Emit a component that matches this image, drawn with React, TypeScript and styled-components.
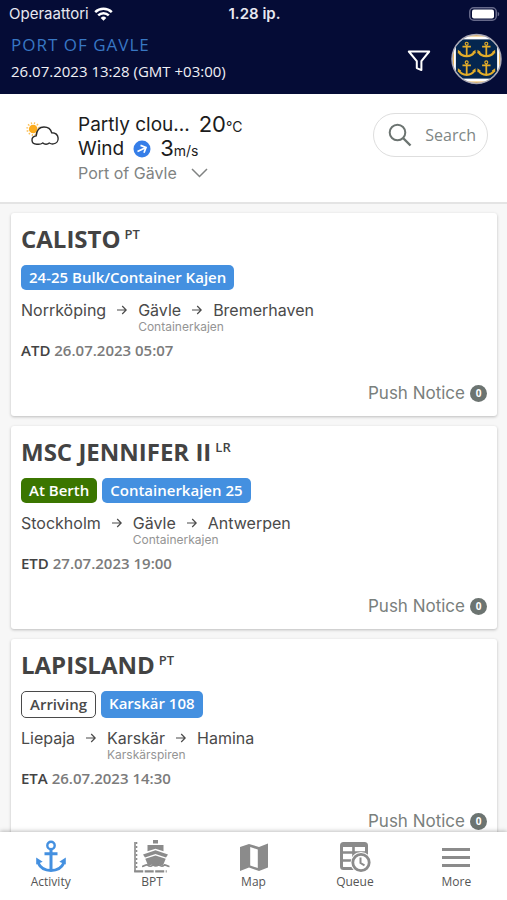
import React from "react";
import styled, { createGlobalStyle, css } from "styled-components";

const sans = `"Open Sans", "Noto Sans", sans-serif`;
const system = `Inter, Roboto, sans-serif`;

const GlobalStyle = createGlobalStyle`
  *, *::before, *::after { box-sizing: border-box; }
  body { margin: 0; background: #f7f7f7; color: #4a4a4a; font-family: ${sans}; }
  h1, h2, p { margin: 0; }
  svg { display: block; flex: none; }
  button { font: inherit; color: inherit; background: none; border: 0; padding: 0; cursor: pointer; }
`;

const Screen = styled.div`
  display: flex;
  flex-direction: column;
  height: 100vh;
  overflow: hidden;
`;

const Header = styled.header`
  flex: none;
  background: #050c36;
  color: #fff;
`;

const StatusBar = styled.div`
  display: grid;
  grid-template-columns: 1fr auto 1fr;
  align-items: center;
  height: 28px;
  padding: 0 7px 0 9px;
  font: 400 15px/20px ${system};
  color: #e8e8f0;
`;

const Carrier = styled.div`
  display: flex;
  align-items: center;
  gap: 5px;
`;

const Clock = styled.time`
  font-weight: 600;
`;

const Battery = styled.div`
  justify-self: end;
`;

const TitleBar = styled.div`
  display: flex;
  align-items: center;
  justify-content: space-between;
  padding: 4px 5px 8px 11px;
`;

const PortName = styled.h1`
  font-size: 17px;
  font-weight: 400;
  line-height: 26px;
  letter-spacing: 1px;
  color: #3877c4;
`;

const PortTime = styled.p`
  padding-bottom: 2px;
  font-size: 15px;
  line-height: 26px;
  color: #f0f0f5;
`;

const HeaderActions = styled.div`
  display: flex;
  align-items: center;
  gap: 20px;
`;

const WeatherBar = styled.section`
  flex: none;
  display: flex;
  align-items: flex-start;
  padding: 19px 19px 16px 26px;
  min-height: 110px;
  background: #fff;
  border-bottom: 2px solid #e4e4e4;
  font-family: ${system};
  color: #1c1c1c;
`;

const WeatherSymbol = styled.div`
  margin-top: 8px;
`;

const WeatherText = styled.div`
  flex: 1;
  margin-left: 18px;
`;

const WeatherLine = styled.p<{ $gap: number }>`
  display: flex;
  align-items: center;
  gap: ${(p) => p.$gap}px;
  height: 24px;
  font-size: 19px;
  line-height: 24px;
`;

const Reading = styled.span`
  font-size: 22px;
`;

const Unit = styled.small`
  font-size: 14px;
`;

const PortSelect = styled.button`
  display: flex;
  align-items: center;
  gap: 14px;
  font-size: 16px;
  line-height: 24px;
  color: #808382;
`;

const SearchButton = styled.button`
  display: flex;
  align-items: center;
  gap: 13px;
  height: 44px;
  padding: 0 11px 0 14px;
  border: 1px solid #dedede;
  border-radius: 22px;
  font-family: ${sans};
  font-size: 16px;
  color: #808785;
`;

const List = styled.main`
  flex: 1;
  min-height: 0;
  overflow-y: auto;
  scrollbar-width: none;
  display: flex;
  flex-direction: column;
  gap: 10px;
  padding: 9px 10px 10px 11px;
`;

const Card = styled.article`
  flex: none;
  padding: 9px 10px 13px;
  background: #fff;
  border-radius: 3px;
  box-shadow: 0 1px 3px rgba(0, 0, 0, 0.24);
`;

const ShipName = styled.h2`
  display: flex;
  gap: 4px;
  font-size: 24px;
  font-weight: 700;
  line-height: 34px;
  color: #434343;
`;

const Flag = styled.span`
  font-size: 13px;
  font-weight: 600;
  line-height: 24px;
`;

const Tags = styled.div`
  display: flex;
  gap: 5px;
  margin-top: 9px;
`;

type Tone = "berth" | "quay" | "outline";

const tones = {
  quay: css`
    background: #4490e0;
    color: #fff;
  `,
  berth: css`
    background: #3b7600;
    color: #fff;
  `,
  outline: css`
    border: 1px solid #4a4a4a;
    color: #4a4a4a;
  `,
};

const Tag = styled.span<{ $tone: Tone }>`
  padding: 2px 8px 3px;
  border-radius: 5px;
  font-size: 15px;
  font-weight: 600;
  line-height: 20px;
  ${(p) => tones[p.$tone]}
`;

const Route = styled.div`
  display: flex;
  align-items: flex-start;
  gap: 11px;
  margin-top: 9px;
  height: 34px;
  font: 400 16px/22px ${system};
`;

const Quay = styled.small`
  display: block;
  font-size: 12px;
  line-height: 12px;
  color: #949494;
`;

const Stop = styled.span`
  /* The quay may be wider than its port, so it is kept out of the row's width. */
  ${Quay} {
    width: 0;
    white-space: nowrap;
  }
`;

const Arrow = styled.span`
  display: flex;
  align-items: center;
  height: 22px;
`;

const Schedule = styled.p`
  margin-top: 7px;
  font-size: 15px;
  font-weight: 600;
  line-height: 20px;
  color: #7b7b7b;

  strong {
    font-weight: 600;
    color: #434343;
  }
`;

const PushNotice = styled.button`
  display: flex;
  align-items: center;
  gap: 5px;
  margin: 23px 0 0 auto;
  font: 400 17px/20px ${system};
  color: #7a807d;
`;

const Count = styled.span`
  width: 17px;
  height: 17px;
  border-radius: 50%;
  background: #6c7471;
  color: #fff;
  font: 700 10px/17px ${sans};
  text-align: center;
`;

const TabBar = styled.nav`
  flex: none;
  display: flex;
  height: 68px;
  background: #fff;
  box-shadow: 0 -1px 4px rgba(0, 0, 0, 0.25);
  position: relative;
`;

const Tab = styled.button<{ $active?: boolean }>`
  flex: 1;
  display: flex;
  flex-direction: column;
  align-items: center;
  justify-content: flex-start;
  padding-top: 8px;
  font-size: 12px;
  line-height: 16px;
  color: #555;

  svg {
    color: ${(p) => (p.$active ? "#4490e0" : "#8b8b8b")};
  }
`;

const WifiIcon = () => (
  <svg width="19" height="15" viewBox="0 0 19 15" fill="none" stroke="#fff" strokeWidth="2.5">
    <path d="M1.2 5.2a11.8 11.8 0 0 1 16.6 0M4.2 8.4a7.5 7.5 0 0 1 10.6 0" />
    <path d="M9.5 13.8 6.7 10.9a4 4 0 0 1 5.6 0z" fill="#fff" stroke="none" />
  </svg>
);

const BatteryIcon = () => (
  <svg width="31" height="14" viewBox="0 0 31 14">
    <rect x=".75" y=".75" width="26.5" height="12.5" rx="4" fill="none" stroke="#66698a" strokeWidth="1.5" />
    <rect x="3" y="2.5" width="22" height="9" rx="2" fill="#fff" />
    <path d="M28.7 4.7c2 .8 2 3.8 0 4.6z" fill="#66698a" />
  </svg>
);

const FilterIcon = () => (
  <svg width="24" height="26" viewBox="0 -4 24 26" fill="none" stroke="#fff" strokeWidth="2" strokeLinejoin="round">
    <path d="M1.8 1.5h20.4l-7.8 9.7v8.9l-4.6-2v-6.9z" />
  </svg>
);

const CrestAnchor = ({ x, y }: { x: number; y: number }) => (
  <g transform={`translate(${x} ${y})`} fill="none" stroke="#e3ad2a">
    <circle cx="9" cy="2.4" r="1.5" strokeWidth="1.2" />
    <path d="M9 4v11M4.7 5.4h8.6" strokeWidth="1.8" />
    <path d="M.8 10.5C2.5 13.5 5.5 15.2 9 15.2s6.5-1.7 8.200-4.700" strokeWidth="2.2" />
    <path d="M0 12.500V8.500l3.500 2.500zM18 12.500V8.500l-3.500 2.500z" fill="#e3ad2a" stroke="none" />
  </g>
);

const Crest = () => (
  <svg width="51" height="52" viewBox="0 0 52 52" role="img" aria-label="Port crest">
    <defs>
      <clipPath id="crest">
        <circle cx="26" cy="26" r="24.5" />
      </clipPath>
    </defs>
    <circle cx="26" cy="26" r="25" fill="#fff" />
    <g clipPath="url(#crest)">
      <path d="M14 0h24v3H14zM14 49h24v3H14zM0 14h3v24H0zM49 14h3v24h-3z" fill="#e9b457" />
      <rect x="5" y="6" width="42" height="40" fill="#04264f" />
    </g>
    <circle cx="26" cy="26" r="25" fill="none" stroke="#a9a7b3" strokeWidth="1.5" />
    <CrestAnchor x={7} y={8} />
    <CrestAnchor x={27} y={8} />
    <CrestAnchor x={7} y={27} />
    <CrestAnchor x={27} y={27} />
  </svg>
);

const PartlyCloudy = () => (
  <svg width="34" height="26" viewBox="0 0 34 26" role="img" aria-label="Partly cloudy">
    <circle cx="7.2" cy="8" r="4.3" fill="#fbab1d" />
    <circle cx="7.2" cy="8" r="6" fill="none" stroke="#fbc15a" strokeWidth="1.8" strokeDasharray="1.3 1.84" />
    <path
      d="M10.8 23.2c-6.3 0-6.3-7.600-.6-8.300C10.700 8.800 14 6 18 6c4.200 0 6.800 2.300 7.700 5.700 8.200.3 8.400 10.300 1.600 11.200-1.700.3-3-.3-4-.9-1.800 1.700-4.800 1.700-6.500 0-1.700 1.200-4 1.500-6 1.200z"
      fill="#fff"
      stroke="#2b2b2b"
      strokeWidth="1.4"
    />
  </svg>
);

const WindIcon = () => (
  <svg width="18" height="18" viewBox="0 0 18 18" fill="none">
    <circle cx="9" cy="9" r="8.5" fill="#357ee8" />
    <path d="M4.500 11.500 13 7.400M7.500 5.400l5.500 2-2 5.400" stroke="#fff" strokeWidth="1.7" />
  </svg>
);

const ChevronDown = () => (
  <svg width="17" height="10" viewBox="0 0 17 10" fill="none" stroke="#808382" strokeWidth="1.5">
    <path d="m1 1 7.500 7.500L16 1" />
  </svg>
);

const SearchIcon = () => (
  <svg width="24" height="24" viewBox="0 0 24 24" fill="none" stroke="#6c7471" strokeWidth="2">
    <circle cx="9.5" cy="9.5" r="7.8" />
    <path d="m15 15 7.500 7.500" strokeWidth="2.4" />
  </svg>
);

const ArrowIcon = () => (
  <svg width="10" height="10" viewBox="0 0 10 10" fill="none" stroke="#4a4a4a" strokeWidth="1.2">
    <path d="M0 5h9M5.200 1 9.200 5 5.200 9" />
  </svg>
);

const AnchorIcon = () => (
  <svg width="32" height="34" viewBox="0 0 32 34" fill="none" stroke="currentColor">
    <circle cx="16" cy="5.5" r="3.7" strokeWidth="2.4" />
    <path d="M16 9.500V31M9.500 13.700h13" strokeWidth="3" />
    <path d="M3.200 23C5.500 28.200 10 30.500 16 30.500S26.500 28.200 28.800 23" strokeWidth="3" />
    <path d="M1.200 17.500v7l6.500-2.700zM30.800 17.500v7l-6.500-2.700z" fill="currentColor" stroke="none" />
  </svg>
);

const ShipIcon = () => (
  <svg width="38" height="34" viewBox="0 0 38 34" fill="currentColor">
    <path d="M2 2v30" fill="none" stroke="currentColor" strokeWidth="1.6" />
    <path d="M3.500 2v28" fill="none" stroke="currentColor" strokeWidth="1.6" strokeDasharray="2 2" />
    <path d="M1.2 31.400h32.500" fill="none" stroke="currentColor" strokeWidth="2.4" strokeDasharray="9 1.500" />
    <path d="M20 0h5v3.500h-5zM14.500 5h16v6.200l-8-2.400-8 2.400z" />
    <path d="m10 14.500 12.500-4.300L35 14.500l-2 3-10.500-3.400L12 17.500z" />
    <path d="m12.300 18.700 10.200-3.300 10.200 3.300-2.200 5.500c-1.500 1.500-3 1.500-4.500.3-2 1.600-5 1.600-7 0-1.500 1.200-3 1.200-4.500-.3z" />
    <path d="M9 26.500c2.500 0 3-2 5-1.700 3 2 4 1.800 6 0 2 1.700 3.500 1.700 5.500 0 3 1.800 4 1.800 6 0 2 .2 2.500 1.700 5 1.700" fill="none" stroke="currentColor" strokeWidth="1.7" />
  </svg>
);

const MapIcon = () => (
  <svg width="30" height="34" viewBox="0 0 30 34" fill="currentColor">
    <path
      fillRule="evenodd"
      d="M1 7 10 4l10 3 9-3.500v24L20 31l-10-3.500L1 31zM11.200 7v18.600l7.600 2.500V9.500z"
    />
  </svg>
);

const QueueIcon = () => (
  <svg width="32" height="34" viewBox="0 0 32 34" fill="none" stroke="currentColor">
    <rect x="2.500" y="3.500" width="25" height="25" rx="2" strokeWidth="3" />
    <path d="M2 5h26" strokeWidth="4" />
    <path d="M2 12.500h25M2 20.500h13M14.500 4v25" strokeWidth="2.6" />
    <circle cx="22" cy="22.5" r="10.5" fill="#fff" stroke="none" />
    <circle cx="22" cy="22.5" r="8.2" strokeWidth="2.8" />
    <path d="M21.500 17.500v5.500l4 2.300" strokeWidth="2" />
  </svg>
);

const MenuIcon = () => (
  <svg width="28" height="34" viewBox="0 0 28 34" fill="none" stroke="currentColor" strokeWidth="3">
    <path d="M0 9.500h28M0 17.500h28M0 25.500h28" />
  </svg>
);

type Ship = {
  name: string;
  flag: string;
  tags: { text: string; tone: Tone }[];
  from: string;
  port: string;
  quay: string;
  to: string;
  event: string;
  time: string;
};

const ships: Ship[] = [
  {
    name: "CALISTO",
    flag: "PT",
    tags: [{ text: "24-25 Bulk/Container Kajen", tone: "quay" }],
    from: "Norrköping",
    port: "Gävle",
    quay: "Containerkajen",
    to: "Bremerhaven",
    event: "ATD",
    time: "26.07.2023 05:07",
  },
  {
    name: "MSC JENNIFER II",
    flag: "LR",
    tags: [
      { text: "At Berth", tone: "berth" },
      { text: "Containerkajen 25", tone: "quay" },
    ],
    from: "Stockholm",
    port: "Gävle",
    quay: "Containerkajen",
    to: "Antwerpen",
    event: "ETD",
    time: "27.07.2023 19:00",
  },
  {
    name: "LAPISLAND",
    flag: "PT",
    tags: [
      { text: "Arriving", tone: "outline" },
      { text: "Karskär 108", tone: "quay" },
    ],
    from: "Liepaja",
    port: "Karskär",
    quay: "Karskärspiren",
    to: "Hamina",
    event: "ETA",
    time: "26.07.2023 14:30",
  },
];

const tabs = [
  { label: "Activity", Icon: AnchorIcon },
  { label: "BPT", Icon: ShipIcon },
  { label: "Map", Icon: MapIcon },
  { label: "Queue", Icon: QueueIcon },
  { label: "More", Icon: MenuIcon },
];

const ShipCard = ({ ship }: { ship: Ship }) => (
  <Card>
    <ShipName>
      {ship.name}
      <Flag>{ship.flag}</Flag>
    </ShipName>
    <Tags>
      {ship.tags.map((tag) => (
        <Tag key={tag.text} $tone={tag.tone}>
          {tag.text}
        </Tag>
      ))}
    </Tags>
    <Route>
      <Stop>{ship.from}</Stop>
      <Arrow><ArrowIcon /></Arrow>
      <Stop>
        {ship.port}
        <Quay>{ship.quay}</Quay>
      </Stop>
      <Arrow><ArrowIcon /></Arrow>
      <Stop>{ship.to}</Stop>
    </Route>
    <Schedule>
      <strong>{ship.event}</strong> {ship.time}
    </Schedule>
    <PushNotice>
      Push Notice <Count>0</Count>
    </PushNotice>
  </Card>
);

export default function App() {
  return (
    <Screen>
      <GlobalStyle />
      <Header>
        <StatusBar>
          <Carrier>
            Operaattori <WifiIcon />
          </Carrier>
          <Clock>1.28 ip.</Clock>
          <Battery><BatteryIcon /></Battery>
        </StatusBar>
        <TitleBar>
          <div>
            <PortName>PORT OF GAVLE</PortName>
            <PortTime>26.07.2023 13:28 (GMT +03:00)</PortTime>
          </div>
          <HeaderActions>
            <button aria-label="Filter"><FilterIcon /></button>
            <Crest />
          </HeaderActions>
        </TitleBar>
      </Header>
      <WeatherBar>
        <WeatherSymbol><PartlyCloudy /></WeatherSymbol>
        <WeatherText>
          <WeatherLine $gap={9}>
            <span>Partly clou...</span>
            <span><Reading>20</Reading><Unit>°C</Unit></span>
          </WeatherLine>
          <WeatherLine $gap={9}>
            <span>Wind</span>
            <WindIcon />
            <span><Reading>3</Reading><Unit>m/s</Unit></span>
          </WeatherLine>
          <PortSelect>
            Port of Gävle <ChevronDown />
          </PortSelect>
        </WeatherText>
        <SearchButton>
          <SearchIcon /> Search
        </SearchButton>
      </WeatherBar>
      <List>
        {ships.map((ship) => (
          <ShipCard key={ship.name} ship={ship} />
        ))}
      </List>
      <TabBar aria-label="Main">
        {tabs.map(({ label, Icon }, i) => (
          <Tab key={label} $active={i === 0} aria-current={i === 0 ? "page" : undefined}>
            <Icon />
            {label}
          </Tab>
        ))}
      </TabBar>
    </Screen>
  );
}
